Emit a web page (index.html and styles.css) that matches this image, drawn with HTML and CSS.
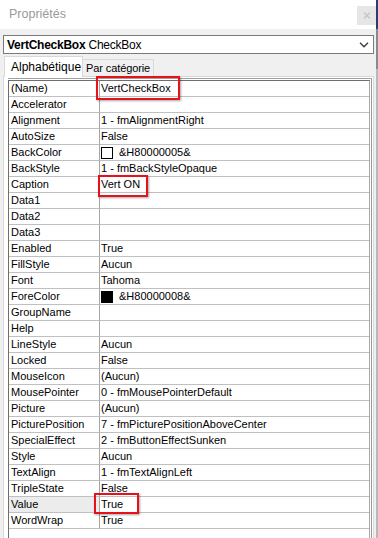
FILE: index.html
```html
<!DOCTYPE html>
<html lang="fr">
<head>
<meta charset="utf-8">
<title>Propriétés</title>
<link rel="stylesheet" href="styles.css">
</head>
<body>
<div class="window">
  <div class="main">
    <div class="titlebar">
      <span class="title">Propriétés</span>
      <span class="close"><svg width="8" height="7" viewBox="0 0 8 7"><path d="M1 0.5 L7 6.5 M7 0.5 L1 6.5" stroke="#c4c4c4" stroke-width="1.2" fill="none"/></svg></span>
    </div>
    <div class="combo">
      <span class="combo-text"><b>VertCheckBox</b> CheckBox</span>
      <svg class="chev" width="10" height="6" viewBox="0 0 10 6"><path d="M1 0.8 L5 4.8 L9 0.8" stroke="#3a3a3a" stroke-width="1.3" fill="none"/></svg>
    </div>
    <div class="tabs">
      <div class="tab active">Alphabétique</div>
      <div class="tab">Par catégorie</div>
    </div>
    <div class="panel">
      <div class="grid">
        <div class="table">
          <div class="row"><div class="name">(Name)</div><div class="val"><span>VertCheckBox</span><i class="mark mark-name"></i></div></div>
          <div class="row"><div class="name">Accelerator</div><div class="val"></div></div>
          <div class="row"><div class="name">Alignment</div><div class="val">1 - fmAlignmentRight</div></div>
          <div class="row"><div class="name">AutoSize</div><div class="val">False</div></div>
          <div class="row"><div class="name">BackColor</div><div class="val"><span class="swatch white"></span>&amp;H80000005&amp;</div></div>
          <div class="row"><div class="name">BackStyle</div><div class="val">1 - fmBackStyleOpaque</div></div>
          <div class="row"><div class="name">Caption</div><div class="val"><span>Vert ON</span><i class="mark mark-caption"></i></div></div>
          <div class="row"><div class="name">Data1</div><div class="val"></div></div>
          <div class="row"><div class="name">Data2</div><div class="val"></div></div>
          <div class="row"><div class="name">Data3</div><div class="val"></div></div>
          <div class="row"><div class="name">Enabled</div><div class="val">True</div></div>
          <div class="row"><div class="name">FillStyle</div><div class="val">Aucun</div></div>
          <div class="row"><div class="name">Font</div><div class="val">Tahoma</div></div>
          <div class="row"><div class="name">ForeColor</div><div class="val"><span class="swatch black"></span>&amp;H80000008&amp;</div></div>
          <div class="row"><div class="name">GroupName</div><div class="val"></div></div>
          <div class="row"><div class="name">Help</div><div class="val"></div></div>
          <div class="row"><div class="name">LineStyle</div><div class="val">Aucun</div></div>
          <div class="row"><div class="name">Locked</div><div class="val">False</div></div>
          <div class="row"><div class="name">MouseIcon</div><div class="val">(Aucun)</div></div>
          <div class="row"><div class="name">MousePointer</div><div class="val">0 - fmMousePointerDefault</div></div>
          <div class="row"><div class="name">Picture</div><div class="val">(Aucun)</div></div>
          <div class="row"><div class="name">PicturePosition</div><div class="val">7 - fmPicturePositionAboveCenter</div></div>
          <div class="row"><div class="name">SpecialEffect</div><div class="val">2 - fmButtonEffectSunken</div></div>
          <div class="row"><div class="name">Style</div><div class="val">Aucun</div></div>
          <div class="row"><div class="name">TextAlign</div><div class="val">1 - fmTextAlignLeft</div></div>
          <div class="row"><div class="name">TripleState</div><div class="val">False</div></div>
          <div class="row selected"><div class="name">Value</div><div class="val"><span>True</span><i class="mark mark-value"></i></div></div>
          <div class="row"><div class="name">WordWrap</div><div class="val">True</div></div>
        </div>
      </div>
    </div>
  </div>
  <div class="edge"><div class="edge-top"></div><div class="edge-mid"></div></div>
</div>
</body>
</html>
```

FILE: styles.css
```css
* { box-sizing: border-box; }
html, body { margin: 0; padding: 0; }
body {
  width: 378px;
  height: 538px;
  overflow: hidden;
  background: #f0f0f0;
  font-family: "Liberation Sans", Arial, sans-serif;
  color: #000;
}
.window { display: flex; height: 538px; }
.main { width: 376px; display: flex; flex-direction: column; }
.edge { width: 2px; display: flex; flex-direction: column; background: #b9b9b9; }
.edge-top { height: 29px; background: #2c3c6c; }
.edge-mid { height: 40px; background: #8a8a8a; }

.titlebar {
  height: 29px;
  background: #fff;
  display: flex;
  align-items: flex-start;
  justify-content: space-between;
}
.title {
  margin: 7px 0 0 9px;
  font-size: 12.5px;
  color: #9a9a9a;
  line-height: 15px;
}
.close {
  margin-top: 6px;
  width: 19px;
  height: 19px;
  background: #e6e6e6;
  display: flex;
  align-items: center;
  justify-content: center;
}

.combo {
  margin: 6px 0 0 3px;
  width: 371px;
  height: 19px;
  border: 1px solid #7a7a7a;
  background: #fff;
  display: flex;
  align-items: center;
  justify-content: space-between;
  padding: 0 4px 0 3px;
  font-size: 12px;
}
.combo-text { letter-spacing: -0.25px; white-space: nowrap; }
.combo-text b { font-weight: bold; }
.chev { margin-top: 1px; }

.tabs {
  margin: 2px 0 0 4px;
  height: 20px;
  display: flex;
  align-items: flex-end;
  position: relative;
  z-index: 1;
}
.tab {
  font-size: 11px;
  letter-spacing: -0.1px;
  border: 1px solid #d9d9d9;
  border-bottom: none;
  background: #f0f0f0;
  height: 17px;
  width: 72px;
  margin-left: -1px;
  padding: 1px 0 0 3px;
  line-height: 15px;
  white-space: nowrap;
  overflow: hidden;
}
.tab.active {
  margin-left: 0;
  height: 21px;
  width: 79px;
  margin-bottom: -1px;
  background: #fff;
  padding: 3px 0 0 6px;
  font-size: 12px;
  letter-spacing: 0;
}

.panel {
  margin-left: 3px;
  width: 371px;
  flex: 1;
  border: 1px solid #d9d9d9;
  border-bottom: none;
  background: #fff;
  padding: 1px 1px 0 4px;
}
.grid {
  height: 100%;
  border-top: 1px solid #a0a0a0;
  border-right: 1px solid #9a9a9a;
  padding: 1px 1px 0 0;
}
.table {
  height: 100%;
  border-top: 1px solid #6e6e6e;
  border-left: 1px solid #6e6e6e;
  border-right: 1px solid #a8a8a8;
}
.row {
  display: flex;
  height: 16px;
  font-size: 11px;
  line-height: 15px;
}
.name {
  width: 91px;
  flex: none;
  padding-left: 2px;
  border-right: 1px solid #a6a6a6;
  border-bottom: 1px solid #c0c0c0;
  white-space: nowrap;
  overflow: hidden;
}
.val {
  flex: 1;
  position: relative;
  padding-left: 1px;
  border-bottom: 1px solid #c0c0c0;
  display: flex;
  align-items: center;
  white-space: nowrap;
}
.row.selected .name { background: #ececec; }

.swatch {
  width: 12px;
  height: 12px;
  border: 1px solid #000;
  margin: 0 6px 0 0;
  flex: none;
}
.swatch.white { background: #fff; }
.swatch.black { background: #000; }

.mark {
  position: absolute;
  border: 2px solid #e8101a;
  box-shadow: 1px 1px 2px rgba(0, 0, 0, 0.35);
}
.mark-name { left: -4px; top: -5px; width: 84px; height: 24px; }
.mark-caption { left: -2px; top: -2px; width: 50px; height: 22px; }
.mark-value { left: -6px; top: -4px; width: 45px; height: 21px; }
```
